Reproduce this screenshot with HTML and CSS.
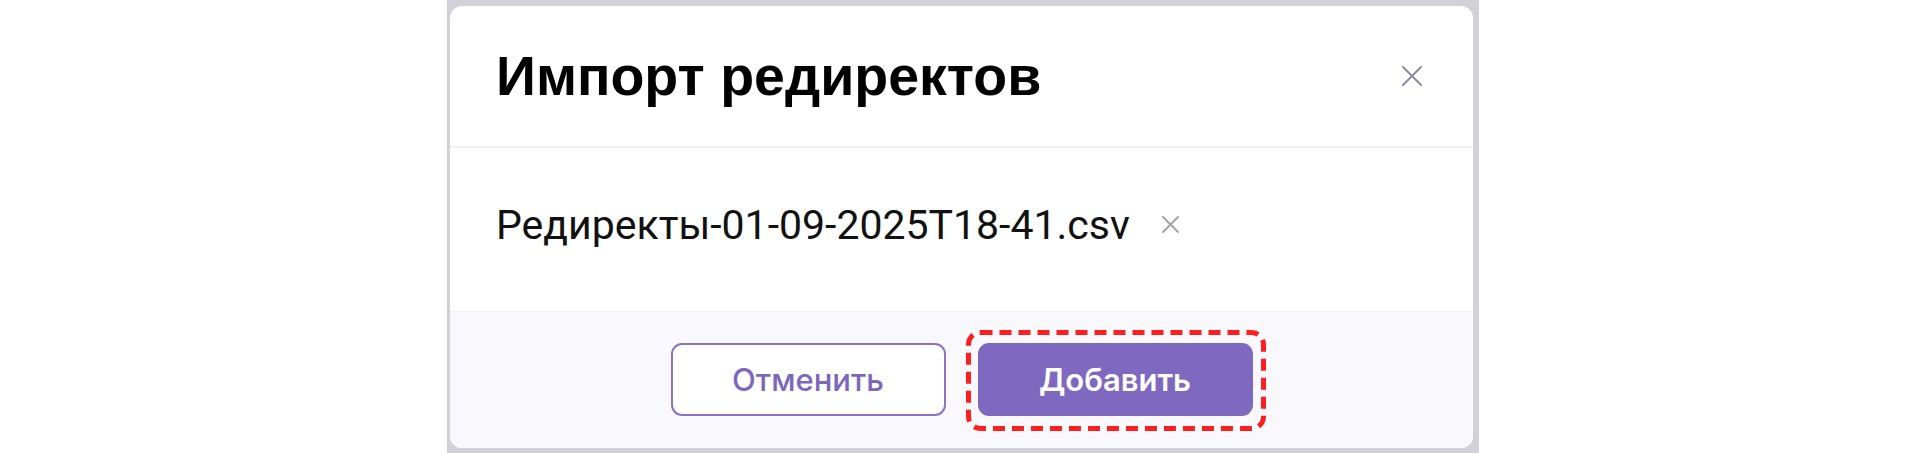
FILE: index.html
```html
<!DOCTYPE html>
<html lang="ru">
<head>
  <meta charset="UTF-8">
  <meta name="viewport" content="width=device-width, initial-scale=1.0">
  <title>Импорт редиректов</title>
  <link rel="stylesheet" href="styles.css">
</head>
<body>
  <div class="overlay">
    <div class="modal">
      <div class="modal-header">
        <h2 class="modal-title">Импорт редиректов</h2>
        <button class="icon-btn close-btn" aria-label="Закрыть">
          <svg width="22" height="22" viewBox="0 0 22 22"><path d="M2 2L20 20M20 2L2 20" stroke="currentColor" stroke-width="2" stroke-linecap="round"/></svg>
        </button>
      </div>
      <div class="modal-body">
        <div class="file">
          <span class="file-name">Редиректы-01-09-2025T18-41.csv</span>
          <button class="icon-btn file-remove" aria-label="Удалить файл">
            <svg width="19" height="19" viewBox="0 0 19 19"><path d="M2 2L17 17M17 2L2 17" stroke="currentColor" stroke-width="2" stroke-linecap="round"/></svg>
          </button>
        </div>
      </div>
      <div class="modal-footer">
        <button class="btn btn-outline">Отменить</button>
        <button class="btn btn-primary">
          Добавить
          <svg class="focus-ring" width="300" height="101" viewBox="0 0 300 101"><rect x="2.5" y="2.5" width="295" height="96" rx="12" fill="none" stroke="#ff1e1e" stroke-width="5" stroke-dasharray="12 7"/></svg>
        </button>
      </div>
    </div>
  </div>
</body>
</html>
```

FILE: styles.css
```css
* {
  box-sizing: border-box;
}

body {
  margin: 0;
  background: #fff;
  font-family: "Liberation Sans", Arial, sans-serif;
}

.overlay {
  margin-left: 447px;
  width: 1032px;
  height: 453px;
  background: #d1d1d7;
  padding: 6px 6px 5px 3px;
}

.modal {
  height: 100%;
  background: #fff;
  border-radius: 12px;
  overflow: hidden;
  display: flex;
  flex-direction: column;
}

.modal-header {
  height: 142px;
  flex: none;
  display: flex;
  align-items: center;
  justify-content: space-between;
  padding: 0 50px 0 46px;
  border-bottom: 2px solid #efeff5;
}

.modal-title {
  margin: 0;
  font-size: 55.5px;
  font-weight: 700;
  color: #000;
  line-height: 1;
  padding-top: 2px;
}

.icon-btn {
  border: 0;
  background: none;
  padding: 0;
  display: flex;
  color: #8c8ba0;
}

.modal-body {
  flex: 1;
  display: flex;
  align-items: center;
  padding: 0 46px 10px;
}

.file {
  display: flex;
  align-items: center;
  gap: 31px;
}

.file-name {
  font-family: Roboto, "Liberation Sans", sans-serif;
  font-size: 41px;
  color: #111;
}

.file-remove {
  color: #a3a3ad;
}

.modal-footer {
  height: 137px;
  flex: none;
  background: #f9f9fd;
  border-top: 1px solid #f0f0f6;
  display: flex;
  align-items: center;
  justify-content: center;
  gap: 32px;
  padding-bottom: 2px;
}

.btn {
  position: relative;
  width: 275px;
  height: 73px;
  border-radius: 11px;
  font-family: Inter, "Liberation Sans", sans-serif;
  font-size: 31px;
  font-weight: 500;
}

.btn-outline {
  background: #fff;
  border: 2px solid #8b74c8;
  color: #7d67bd;
}

.btn-primary {
  background: #7f68c0;
  border: 2px solid #7f68c0;
  color: #fff;
  font-weight: 600;
}

.focus-ring {
  position: absolute;
  left: -14px;
  top: -15px;
  pointer-events: none;
}
```
